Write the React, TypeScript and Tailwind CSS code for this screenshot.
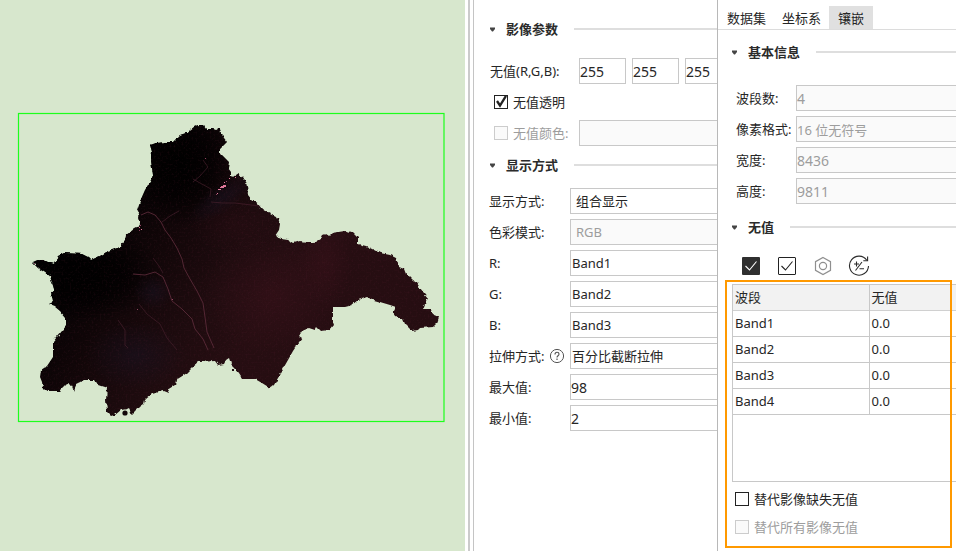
import React, { useState } from "react";
import clsx from "clsx";

interface SectionTitleProps {
  title: string;
}

interface FieldRowProps {
  id: string;
  label: string;
  labelClass: string;
  help?: boolean;
  children: React.ReactNode;
}

interface CheckProps {
  id: string;
  label: string;
  checked?: boolean;
  disabled?: boolean;
}

const OUTLINE =
  "150,145 153,144 156,143 168,142 173,142 178,137 180,135 186,133 188,133 190,130 194,127 199,125 203,125 206,129 213,129 216,130 217,128 220,128 221,133 224,138 227,142 223,146 220,149 220,153 222,155 226,159 229,162 228,168 231,172 231,175 235,176 238,174 243,177 246,182 247,187 248,195 252,200 258,204 262,209 268,213 278,218 280,224 279,230 275,236 281,239 288,240 293,243 300,241 308,242 316,242 321,239 323,235 326,234 329,236 332,233 345,231 352,232 358,238 358,244 366,246 374,250 380,253 390,255 396,258 399,267 404,269 406,274 412,280 417,283 420,288 424,293 428,298 425,304 423,309 431,309 434,315 439,317 437,323 433,327 420,328 418,330 412,331 405,324 403,319 395,316 393,313 396,307 390,305 380,302 373,300 367,297 358,300 352,305 344,307 333,307 333,322 334,325 330,330 321,331 317,327 315,330 309,328 302,331 299,336 302,338 297,345 293,351 288,360 284,367 278,378 274,385 270,388 262,383 255,379 247,379 243,379 239,373 235,368 231,364 229,358 226,360 224,364 218,365 215,361 199,362 193,367 187,373 176,380 175,385 167,390 168,393 163,391 152,394 145,400 144,404 137,409 132,414 129,408 127,409 121,410 115,415 112,416 107,411 106,400 107,388 98,385 95,380 85,380 77,384 74,391 72,385 67,384 60,391 49,391 43,389 42,382 40,377 41,370 47,366 53,357 53,342 57,337 62,331 66,326 66,318 60,311 54,306 49,304 53,302 51,293 54,289 50,276 44,272 38,268 33,263 42,259 48,262 54,264 58,256 64,253 82,254 88,257 91,260 100,256 108,251 120,247 125,241 126,234 134,228 140,225 138,218 139,212 137,211 141,199 145,190 151,180 153,175 151,161 152,152";

const ROADS = [
  "141,215 148,212 155,215 161,222 165,230 171,238 177,248 182,259 184,268 190,279 197,291 203,303 205,317 207,332 214,348",
  "133,274 145,275 155,272 163,277 168,289 172,301 182,309 192,319 195,329 203,339 208,350",
  "162,222 170,216 179,211",
  "193,182 200,176 208,167 203,160",
  "193,179 200,183 211,189 210,197",
  "211,202 222,203 235,203 259,206",
  "118,320 125,330 125,345 128,348",
  "139,304 147,314 160,324 167,338 177,350",
  "153,258 159,266 163,273",
];

const BRIGHT = [
  [221, 186], [223, 185], [218, 189], [217, 193], [224, 182], [229, 178], [235, 177], [220, 187],
  [139, 227], [141, 229], [140, 225], [139, 230], [205, 158], [34, 263], [137, 309], [172, 299],
  [226, 181], [216, 194],
];

const bands = ["Band1", "Band2", "Band3", "Band4"];

const fieldBase =
  "h-[26px] min-w-0 appearance-none rounded-none border border-[#c8c8c8] bg-white outline-none disabled:bg-[#fafafa] disabled:text-[#9d9d9d] disabled:opacity-100";

const SectionTitle: React.FC<SectionTitleProps> = ({ title }) => (
  <h2 className="flex h-6 items-center font-bold text-[#2b2b2b]">
    <svg className="mr-[10px] h-[5px] w-[7px] shrink-0" viewBox="0 0 7 5" aria-hidden="true">
      <path d="M1 .5h5v1.5L4 4.5H3L1 2z" fill="#444" />
    </svg>
    {title}
    <span className="ml-4 h-[2px] flex-1 bg-[#dedede]" />
  </h2>
);

const FieldRow: React.FC<FieldRowProps> = ({ id, label, labelClass, help, children }) => (
  <div className="flex h-[26px] items-center">
    <div className={clsx("flex shrink-0 items-center whitespace-nowrap", labelClass)}>
      <label htmlFor={id}>{label}</label>
      {help && (
        <button type="button" aria-label="帮助" className="ml-[5px]">
          <svg className="block h-4 w-4" viewBox="0 0 16 16" fill="none" stroke="#555">
            <circle cx="8" cy="8" r="6.6" />
            <path d="M6 6.4C6 5 6.8 4.3 8 4.3s2 .8 2 1.9c0 1.5-2 1.6-2 3.2" strokeWidth="1.1" />
            <path d="M8 10.6v1.3" strokeWidth="1.2" />
          </svg>
        </button>
      )}
    </div>
    {children}
  </div>
);

const Check: React.FC<CheckProps> = ({ id, label, checked = false, disabled }) => {
  const [on, setOn] = useState(checked);
  return (
    <div className={clsx("flex items-center", disabled && "text-[#9d9d9d]")}>
      <span className="relative mr-[5px] h-[14px] w-[14px] shrink-0">
        <input
          id={id}
          type="checkbox"
          checked={on}
          disabled={disabled}
          onChange={() => setOn(!on)}
          className="block h-[14px] w-[14px] appearance-none border border-[#222] bg-white disabled:border-[#ccc] disabled:bg-[#fafafa]"
        />
        {on && (
          <svg
            className="pointer-events-none absolute inset-0 h-[14px] w-[14px]"
            viewBox="0 0 14 14"
            fill="none"
            stroke="#222"
          >
            <path d="M3 6l3 4.500L12 .8" strokeWidth="2.300" />
          </svg>
        )}
      </span>
      <label htmlFor={id}>{label}</label>
    </div>
  );
};

const MapView: React.FC = () => (
  <svg className="h-full w-full" viewBox="0 0 465 551" role="img" aria-label="影像">
    <defs>
      <linearGradient id="terrain" gradientUnits="userSpaceOnUse" x1="105" y1="215" x2="260" y2="320">
        <stop offset="0" stopColor="#040203" />
        <stop offset="0.35" stopColor="#120709" />
        <stop offset="0.7" stopColor="#1e0c0f" />
        <stop offset="1" stopColor="#260e12" />
      </linearGradient>
      <radialGradient id="dark">
        <stop offset="0" stopColor="#000" stopOpacity="0.95" />
        <stop offset="0.5" stopColor="#000" stopOpacity="0.7" />
        <stop offset="1" stopColor="#000" stopOpacity="0" />
      </radialGradient>
      <radialGradient id="warm">
        <stop offset="0" stopColor="#3a121b" stopOpacity="0.5" />
        <stop offset="1" stopColor="#3a121b" stopOpacity="0" />
      </radialGradient>
      <radialGradient id="cool">
        <stop offset="0" stopColor="#1a1424" stopOpacity="0.5" />
        <stop offset="1" stopColor="#1a1424" stopOpacity="0" />
      </radialGradient>
      <clipPath id="land">
        <polygon points={OUTLINE} />
      </clipPath>
      <filter id="rough" x="0" y="0" width="1" height="1" colorInterpolationFilters="sRGB">
        <feTurbulence type="fractalNoise" baseFrequency="0.2" numOctaves="2" seed="4" result="n" />
        <feDisplacementMap in="SourceGraphic" in2="n" scale="4" xChannelSelector="R" yChannelSelector="G" />
      </filter>
      <filter id="grain" x="0" y="0" width="1" height="1" colorInterpolationFilters="sRGB">
        <feTurbulence type="fractalNoise" baseFrequency="0.5" numOctaves="3" seed="9" />
        <feColorMatrix values="0 0 0 0 0.38  0 0 0 0 0.14  0 0 0 0 0.22  2.6 0 0 0 -1.25" />
      </filter>
    </defs>
    <rect x="18.5" y="113.5" width="425.5" height="308" fill="none" stroke="#1cff1c" strokeWidth="1.2" />
    <g filter="url(#rough)">
      <g clipPath="url(#land)">
        <rect x="19" y="114" width="424" height="307" fill="url(#terrain)" />
        <ellipse cx="182" cy="165" rx="56" ry="62" fill="url(#dark)" />
        <ellipse cx="85" cy="275" rx="80" ry="48" fill="url(#dark)" />
        <ellipse cx="270" cy="295" rx="70" ry="60" fill="url(#warm)" />
        <ellipse cx="325" cy="262" rx="28" ry="45" fill="url(#warm)" />
        <ellipse cx="235" cy="225" rx="45" ry="30" fill="url(#warm)" opacity="0.5" />
        <ellipse cx="135" cy="355" rx="50" ry="34" fill="url(#cool)" />
        <ellipse cx="222" cy="198" rx="40" ry="14" fill="url(#cool)" transform="rotate(-35 222 198)" />
        <ellipse cx="153" cy="292" rx="20" ry="18" fill="url(#cool)" />
      </g>
    </g>
    <g clipPath="url(#land)">
      <rect x="19" y="114" width="424" height="307" filter="url(#grain)" opacity="0.2" />
      {ROADS.map((points, idx) => (
        <polyline
          key={idx}
          points={points}
          fill="none"
          stroke={idx < 2 ? "#5a2a38" : "#44202c"}
          strokeWidth="1"
          opacity={idx < 2 ? 0.9 : 0.7}
        />
      ))}
    </g>
    {BRIGHT.map(([x, y], idx) => (
      <rect
        key={idx}
        x={x}
        y={y}
        width={idx < 3 ? 3 : 1}
        height={idx < 2 ? 2 : 1}
        fill={idx < 10 ? "#e0789a" : "#8d4560"}
      />
    ))}
    <circle cx="125" cy="413" r="2.6" fill="#12080a" />
    <rect x="232" y="369" width="2" height="2" fill="#1e0c10" />
  </svg>
);

const ImagePanel: React.FC = () => {
  const label = "w-[81px]";
  const open = "flex-1 border-r-0";
  return (
    <section className="w-[243px] shrink-0 overflow-hidden pl-[15px] pt-[17px]">
      <SectionTitle title="影像参数" />
      <div className="mt-[17px] flex flex-col gap-[5px]">
        <div className="flex h-[26px] items-center">
          <label htmlFor="nodata-r" className="w-[90px] shrink-0 pl-px">
            无值(R,G,B):
          </label>
          <div className="flex gap-[6px]">
            <input id="nodata-r" defaultValue="255" className={clsx(fieldBase, "w-[47px] shrink-0 text-sm")} />
            <input aria-label="G" defaultValue="255" className={clsx(fieldBase, "w-[47px] shrink-0 text-sm")} />
            <input aria-label="B" defaultValue="255" className={clsx(fieldBase, "w-[47px] shrink-0 text-sm")} />
          </div>
        </div>
        <div className="flex h-[26px] items-center pl-[5px]">
          <Check id="transparent" label="无值透明" checked />
        </div>
        <div className="flex h-[26px] items-center">
          <div className="w-[90px] shrink-0 pl-[5px]">
            <Check id="nodata-color" label="无值颜色:" disabled />
          </div>
          <input aria-label="无值颜色" disabled className={clsx(fieldBase, open)} />
        </div>
      </div>

      <div className="mt-[7px]">
        <SectionTitle title="显示方式" />
      </div>
      <div className="mt-[11px] flex flex-col gap-[5px]">
        <FieldRow id="display" label="显示方式:" labelClass={label}>
          <select id="display" className={clsx(fieldBase, open, "pl-[5px]")}>
            <option>组合显示</option>
          </select>
        </FieldRow>
        <FieldRow id="mode" label="色彩模式:" labelClass={label}>
          <select id="mode" disabled className={clsx(fieldBase, open, "pl-[5px]")}>
            <option>RGB</option>
          </select>
        </FieldRow>
        {["R", "G", "B"].map((channel, idx) => (
          <FieldRow key={channel} id={channel} label={`${channel}:`} labelClass={label}>
            <select id={channel} defaultValue={bands[idx]} className={clsx(fieldBase, open, "pl-px")}>
              {bands.map((band) => (
                <option key={band}>{band}</option>
              ))}
            </select>
          </FieldRow>
        ))}
        <FieldRow id="stretch" label="拉伸方式:" labelClass={label} help>
          <select id="stretch" className={clsx(fieldBase, open, "pl-px")}>
            <option>百分比截断拉伸</option>
          </select>
        </FieldRow>
        <FieldRow id="max" label="最大值:" labelClass={label}>
          <input id="max" defaultValue="98" className={clsx(fieldBase, open, "text-sm")} />
        </FieldRow>
        <FieldRow id="min" label="最小值:" labelClass={label}>
          <input id="min" defaultValue="2" className={clsx(fieldBase, open, "text-sm")} />
        </FieldRow>
      </div>
    </section>
  );
};

const MosaicPanel: React.FC = () => {
  const info = [
    { id: "bands", label: "波段数:", value: "4" },
    { id: "format", label: "像素格式:", value: "16 位无符号" },
    { id: "width", label: "宽度:", value: "8436" },
    { id: "height", label: "高度:", value: "9811" },
  ];

  return (
    <section className="w-[239px] shrink-0 overflow-hidden border-l border-[#b8b8b8]">
      {/* Tabs */}
      <div role="tablist" className="flex h-[30px] items-end border-b border-[#dcdcdc] pl-px">
        {["数据集", "坐标系", "镶嵌"].map((tab, idx) => (
          <button
            key={tab}
            type="button"
            role="tab"
            aria-selected={idx === 2}
            className={clsx(
              "h-[23px] whitespace-nowrap",
              idx === 2 ? "bg-[#e0e0e0] px-[9px]" : "px-2"
            )}
          >
            {tab}
          </button>
        ))}
      </div>

      <div className="mt-[10px] pl-[13px]">
        <SectionTitle title="基本信息" />
        <div className="mt-[21px] flex flex-col gap-[5px] pl-[5px]">
          {info.map((row) => (
            <FieldRow key={row.id} id={row.id} label={row.label} labelClass="w-[60px]">
              <input
                id={row.id}
                value={row.value}
                disabled
                className={clsx(fieldBase, "flex-1 border-r-0", row.id !== "format" && "text-sm")}
              />
            </FieldRow>
          ))}
        </div>
        <div className="mt-[11px]">
          <SectionTitle title="无值" />
        </div>

        {/* Toolbar */}
        <div className="mt-4 flex h-[22px] items-center gap-[14px] pl-[9px]">
          <button type="button" aria-label="全选">
            <svg className="block h-[22px] w-[22px]" viewBox="0 0 22 22" fill="none">
              <rect x="2" y="2" width="18" height="18" rx="1" fill="#2f2f2f" />
              <path d="M5.500 11l4 4 7-8.500" stroke="#fff" strokeWidth="1.1" />
            </svg>
          </button>
          <button type="button" aria-label="反选">
            <svg className="block h-[22px] w-[22px]" viewBox="0 0 22 22" fill="none" stroke="#222">
              <rect x="2.500" y="2.500" width="17" height="17" rx=".5" />
              <path d="M5.500 11l4 4 7-8.500" strokeWidth="1.1" />
            </svg>
          </button>
          <button type="button" aria-label="设置">
            <svg className="block h-[22px] w-[22px]" viewBox="0 0 22 22" fill="none" stroke="#8f8f8f" strokeWidth="1.2">
              <path d="M11 2.500l7.500 4.200v8.600L11 19.500l-7.500-4.200V6.700z" />
              <circle cx="11" cy="11" r="3.600" />
            </svg>
          </button>
          <button type="button" aria-label="重置">
            <svg className="block h-[22px] w-[22px]" viewBox="0 0 22 22" fill="none" stroke="#2b2b2b" strokeWidth="1.1">
              <path d="M18.800 5.200A9.500 9.500 0 1 0 20.500 11" />
              <path d="M19.600 1.500v4.300h-4.300" />
              <path d="M8.500 6.500v5M6 9h5M14 7l-6.500 8.500M11.500 13.800h4.500" />
            </svg>
          </button>
        </div>
      </div>

      {/* Nodata table */}
      <div className="relative mt-[7px] pl-[14px]">
        <div className="h-[198px] border-y border-l border-[#c8c8c8]">
          <table className="w-full table-fixed border-collapse text-left">
            <thead>
              <tr className="h-[25px] border-b border-[#d0d0d0] bg-[#f2f2f2]">
                <th className="w-[136px] border-r border-[#c8c8c8] py-0 pl-[2px] font-normal">波段</th>
                <th className="py-0 pl-[2px] font-normal">无值</th>
              </tr>
            </thead>
            <tbody>
              {bands.map((band) => (
                <tr key={band} className="h-[26px] border-b border-[#c8c8c8]">
                  <td className="border-r border-[#c8c8c8] py-0 pl-[2px]">{band}</td>
                  <td className="py-0 pl-[2px]">0.0</td>
                </tr>
              ))}
            </tbody>
          </table>
        </div>
        <div className="flex flex-col gap-2 pb-[11px] pl-[3px] pt-[7px]">
          <Check id="fill-missing" label="替代影像缺失无值" />
          <Check id="fill-all" label="替代所有影像无值" disabled />
        </div>
        <div className="pointer-events-none absolute -top-1 bottom-0 left-[7px] right-1 border-2 border-[#ff9900]" />
      </div>
    </section>
  );
};

export default function App() {
  return (
    <div className="flex h-screen overflow-hidden bg-white font-['Noto_Sans','Noto_Sans_CJK_SC',sans-serif] text-[13px] leading-5 text-[#262626]">
      <main className="min-w-0 flex-1 bg-[#d7e7cd]">
        <MapView />
      </main>
      <div className="ml-[3px] w-[2px] shrink-0 bg-[#cbcbcb]" />
      <div className="ml-[3px] w-px shrink-0 bg-[#c4c4c4]" />
      <ImagePanel />
      <MosaicPanel />
    </div>
  );
}
